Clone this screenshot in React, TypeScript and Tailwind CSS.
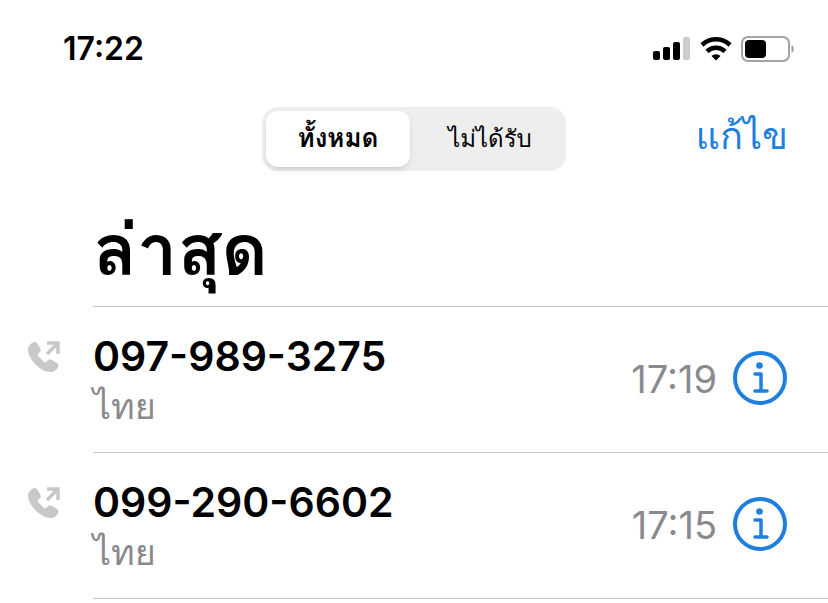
const calls = [
  { number: "097-989-3275", label: "ไทย", time: "17:19" },
  { number: "099-290-6602", label: "ไทย", time: "17:15" },
];

function SignalIcon() {
  return (
    <svg width="38" height="24" viewBox="0 0 38 24" aria-hidden="true">
      <rect x="0" y="14" width="7" height="9" rx="2" />
      <rect x="10" y="10" width="7" height="13" rx="2" />
      <rect x="20" y="5" width="7" height="18" rx="2" />
      <rect x="30" y="0" width="7" height="23" rx="2" fill="#cccccc" />
    </svg>
  );
}

function WifiIcon() {
  return (
    <svg width="32" height="24" viewBox="0 0 32 24" fill="none" stroke="#000" strokeWidth="4.600" aria-hidden="true">
      <path d="M2 8a20 20 0 0 1 28 0" />
      <path d="M7 14.300a13 13 0 0 1 18 0" />
      <path d="M16 23.500l-4.500-4.500a6.500 6.500 0 0 1 9 0z" fill="#000" stroke="none" />
    </svg>
  );
}

function BatteryIcon() {
  return (
    <svg width="54" height="26" viewBox="0 0 54 26" aria-hidden="true">
      <rect x="1" y="1" width="47" height="24" rx="6" fill="none" stroke="#a3a3a3" strokeWidth="2" />
      <rect x="4" y="4" width="21" height="18" rx="4" />
      <path d="M50.500 9c3 1 3 7 0 8z" fill="#a3a3a3" />
    </svg>
  );
}

function OutgoingIcon() {
  return (
    <svg width="34" height="34" viewBox="0 0 34 34" fill="#c8c8c8" aria-hidden="true">
      <path d="M7 2C4 3 1 6 1 10c0 9 13 22 22 22 4 0 7-2 8-5 1-2 0-3-1-4l-5-3c-2-1-3-1-4 0l-2 2c-1 1-2 0-3-1l-4-4c-1-1-2-2-1-3l2-2c1-1 1-2 0-4L10 3C9 2 8 2 7 2z" />
      <path d="M20 14L30 4" fill="none" stroke="#c8c8c8" strokeWidth="3.500" />
      <path d="M20 3h11v11" fill="none" stroke="#c8c8c8" strokeWidth="3.500" />
    </svg>
  );
}

function InfoIcon() {
  return (
    <svg width="54" height="54" viewBox="0 0 54 54" fill="none" stroke="#1f7fe0" aria-hidden="true">
      <circle cx="27" cy="27" r="25" strokeWidth="4" />
      <circle cx="26.500" cy="14.500" r="3.300" fill="#1f7fe0" stroke="none" />
      <path d="M22 23h6v17M22 40h12" strokeWidth="3.500" strokeLinecap="round" strokeLinejoin="round" />
    </svg>
  );
}

export default function App() {
  return (
    <div className="min-h-screen overflow-hidden bg-white font-['Inter','Thonburi','Loma','Noto_Sans_Thai_Looped','Noto_Sans',sans-serif] text-black">
      <header className="flex items-center justify-between pt-[29px] pr-[33px] pl-[63px]">
        <time className="text-[32px] leading-10 font-semibold">17:22</time>
        <div className="flex items-center gap-[9px]">
          <SignalIcon />
          <WifiIcon />
          <BatteryIcon />
        </div>
      </header>

      <nav className="mt-[38px] grid grid-cols-[1fr_auto_1fr] items-center">
        <div className="col-start-2 flex h-16 rounded-2xl bg-[#eeeeef] p-1">
          <button type="button" className="w-36 rounded-xl bg-white pb-1 text-[26px] font-semibold shadow-md">
            ทั้งหมด
          </button>
          <button type="button" className="w-38 pl-2 text-2xl font-normal">
            ไม่ได้รับ
          </button>
        </div>
        <button type="button" className="mr-10 justify-self-end pb-2 text-[38px] leading-14 text-[#1f7fe0]">
          แก้ไข
        </button>
      </nav>

      <main className="pl-[93px]">
        <h1 className="pt-7 pb-[7px] text-[72px] leading-25 font-bold">ล่าสุด</h1>
        <ul className="border-t border-[#c6c6c8]">
          {calls.map((call) => (
            <li key={call.number} className="relative flex h-[146px] items-center justify-between border-b border-[#c6c6c8] pr-[41px]">
              <div className="absolute top-[33px] -left-[66px]">
                <OutgoingIcon />
              </div>
              <div className="pt-1">
                <p className="text-[41px] leading-12 font-semibold">{call.number}</p>
                <p className="text-4xl leading-13 text-[#8a8a8e]">{call.label}</p>
              </div>
              <div className="flex items-center gap-4 pb-1">
                <time className="pt-1 text-[38px] text-[#8a8a8e]">{call.time}</time>
                <button type="button" aria-label={`Info ${call.number}`}>
                  <InfoIcon />
                </button>
              </div>
            </li>
          ))}
        </ul>
      </main>
    </div>
  );
}
